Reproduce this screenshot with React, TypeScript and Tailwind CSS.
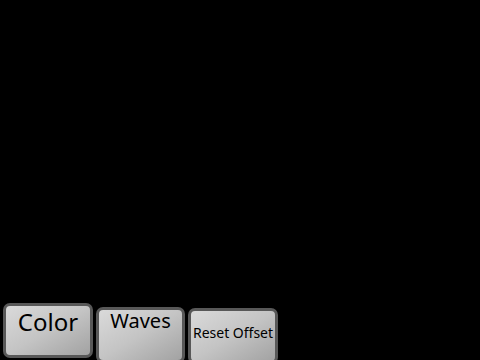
import React from 'react';

const font = { fontFamily: '"Noto Sans", "Open Sans", sans-serif' };

function KeyButton({ label, className, textClass }: { label: string; className: string; textClass: string }) {
    return (
        <button
            className={`shrink-0 rounded-[7px] border-[3px] border-[#585858] bg-gradient-to-br from-[#dadada] via-[#c4c4c4] to-[#a2a2a2] text-black leading-none ${className}`}
        >
            <span className={`block text-center whitespace-nowrap ${textClass}`}>{label}</span>
        </button>
    );
}

export default function App() {
    return (
        <div className="w-[480px] h-[360px] bg-black overflow-hidden flex flex-col" style={font}>
            <div className="flex-1" />
            <div className="flex items-start h-[57px] pl-[3px] gap-[3px]">
                <KeyButton label="Color" className="w-[90px] h-[55px]" textClass="text-[24px] -mt-[17px]" />
                <KeyButton label="Waves" className="w-[89px] h-[56px] mt-[4px]" textClass="text-[20px] -mt-[24px]" />
                <KeyButton label="Reset Offset" className="w-[90px] h-[56px] mt-[5px]" textClass="text-[14px] -mt-[7px]" />
            </div>
        </div>
    );
}
